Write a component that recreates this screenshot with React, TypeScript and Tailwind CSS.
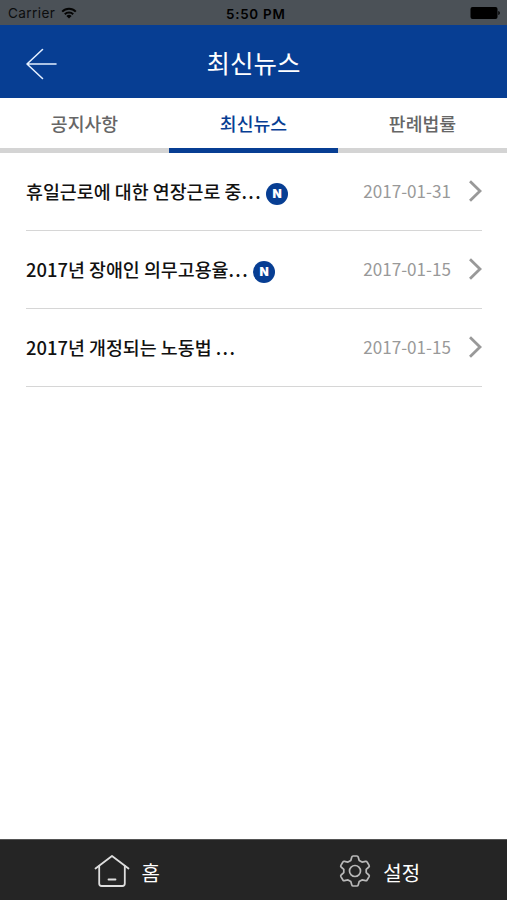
type NewsItem = {
  title: string
  date: string
  isNew: boolean
}

const tabs = ['공지사항', '최신뉴스', '판례법률']

const news: NewsItem[] = [
  { title: '휴일근로에 대한 연장근로 중', date: '2017-01-31', isNew: true },
  { title: '2017년 장애인 의무고용율', date: '2017-01-15', isNew: true },
  { title: '2017년 개정되는 노동법 ', date: '2017-01-15', isNew: false },
]

function StatusBar() {
  return (
    <div className="relative h-[25px] bg-[#4b5157] flex items-center justify-between pl-2 pr-[7px] pt-[2px] font-['Inter','Liberation_Sans',sans-serif] text-black">
      <div className="flex items-center gap-[6px]">
        <span className="text-[13.6px] leading-none tracking-[0.4px] text-[#0c0d0e]">Carrier</span>
        <svg className="w-[16px] h-[12px] -mt-[2px]" viewBox="0 0 16 12" fill="none" stroke="#050505" strokeWidth="2">
          <path d="M1.2 4.6a9.6 9.6 0 0 1 13.6 0" />
          <path d="M3.8 7.2a6 6 0 0 1 8.4 0" />
          <path d="M8 11.6 5.4 9a3.7 3.7 0 0 1 5.2 0z" fill="#050505" stroke="none" />
        </svg>
      </div>
      <span className="absolute left-[226px] top-[7px] text-[13.4px] leading-[14px] font-semibold tracking-[0.75px]">5:50 PM</span>
      <svg className="w-[30px] h-[12px] -mt-px" viewBox="0 0 30 12">
        <rect x="0.5" y="0" width="27" height="12" rx="2" />
        <path d="M28.3 4v4c1-.3 1.5-1.1 1.5-2s-.5-1.7-1.5-2z" />
      </svg>
    </div>
  )
}

function Header() {
  return (
    <header className="h-[73px] bg-[#073e93] grid grid-cols-[1fr_auto_1fr] items-center">
      <svg className="ml-[25px] mt-[5px] w-[32px] h-[32px]" viewBox="0 0 32 32" fill="none" stroke="#e4efff" strokeWidth="1.6" strokeLinecap="round" strokeLinejoin="round">
        <path d="M17.5 1.5 2 16l15.5 14.500M2 16h29" />
      </svg>
      <h1 className="text-[25.5px] leading-[36px] text-white">최신뉴스</h1>
    </header>
  )
}

function Tabs() {
  return (
    <nav className="grid grid-cols-3 h-[55px]">
      {tabs.map((tab, i) => (
        <div
          key={tab}
          className={
            i === 1
              ? 'flex items-center justify-center pt-px border-b-[5px] border-[#073e93] text-[#073e93] text-[18.3px] font-medium'
              : 'flex items-center justify-center pt-px border-b-[5px] border-[#d4d4d4] text-[#666] text-[18.3px] font-medium'
          }
        >
          {tab}
        </div>
      ))}
    </nav>
  )
}

function NewBadge() {
  return (
    <span className="ml-[4px] mt-[5px] flex items-center justify-center w-[22px] h-[22px] rounded-full bg-[#073e93] text-white text-[12px] leading-none font-black font-['Inter',sans-serif]">
      N
    </span>
  )
}

function NewsRow({ item }: { item: NewsItem }) {
  return (
    <li className="flex items-center h-[78px] border-b border-[#d6d6d6]">
      <span className="text-[18.4px] font-medium text-[#111] whitespace-pre">
        {item.title}
        <span className="tracking-[1.4px]">...</span>
      </span>
      {item.isNew && <NewBadge />}
      <span className="ml-auto -mt-[2px] text-[17.1px] text-[#999]">{item.date}</span>
      <svg className="ml-[18px] -mt-[2px] w-[13px] h-[22px]" viewBox="0 0 13 22" fill="none" stroke="#999" strokeWidth="2.8">
        <path d="M1 1.2 11 11 1 20.8" />
      </svg>
    </li>
  )
}

function BottomBar() {
  return (
    <footer className="mt-auto h-[61px] bg-[#252525] border-t border-[#555] grid grid-cols-2 text-white text-[20px]">
      <div className="flex items-center justify-center gap-[12px] pt-[5px]">
        <svg className="w-[36px] h-[34px] -mt-[3px]" viewBox="0 0 36 34" fill="none" stroke="#dedede" strokeWidth="1.8" strokeLinecap="round" strokeLinejoin="round">
          <path d="M1.5 14.5 18 2l16.5 12.5" />
          <path d="M5.2 12v17.5a2.5 2.5 0 0 0 2.5 2.5h20.600a2.5 2.5 0 0 0 2.5-2.5V12" />
          <path d="M14.5 25.5h7" />
        </svg>
        <span>홈</span>
      </div>
      <div className="flex items-center justify-center gap-[12px] pt-[5px]">
        <svg className="w-[32px] h-[32px] -mt-[3px] -ml-px" viewBox="0 0 32 32" fill="none" stroke="#b9b9b9" strokeWidth="1.7" strokeLinejoin="round">
          <path d="M11.8 5.5 12.8 2Q13.100 1 14.100 1h3.800q1 0 1.300 1l1 3.500L23 7.100l3.600-.8q1-.2 1.500.7l2 3.400q.5.900-.2 1.600L27.200 14.400v3.200l2.700 2.400q.7.700.2 1.600l-2 3.400q-.5.900-1.500.7L23 24.900l-2.800 1.600-1 3.500q-.3 1-1.300 1h-3.800q-1 0-1.300-1l-1-3.500L9 24.900l-3.600.8q-1 .2-1.500-.7l-2-3.400q-.5-.9.2-1.600l2.700-2.400v-3.200L2.100 12q-.7-.7-.2-1.600l2-3.400q.5-.9 1.500-.7L9 7.100z" />
          <circle cx="16" cy="16" r="5.5" />
        </svg>
        <span>설정</span>
      </div>
    </footer>
  )
}

export default function App() {
  return (
    <div className="w-full h-[900px] bg-white flex flex-col overflow-hidden font-['Noto_Sans_CJK_KR',sans-serif]">
      <StatusBar />
      <Header />
      <Tabs />
      <ul className="pl-[26px] pr-[25px]">
        {news.map((item) => (
          <NewsRow key={item.title} item={item} />
        ))}
      </ul>
      <BottomBar />
    </div>
  )
}
